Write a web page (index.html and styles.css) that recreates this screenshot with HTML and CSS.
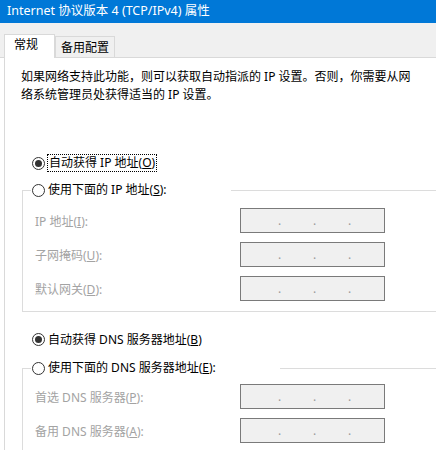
FILE: index.html
```html
<!DOCTYPE html>
<html lang="zh-CN">
<head>
    <meta charset="UTF-8">
    <title>Internet 协议版本 4 (TCP/IPv4) 属性</title>
    <link rel="stylesheet" href="styles.css">
</head>
<body>

    <div class="window">
        <div class="titlebar">Internet 协议版本 4 (TCP/IPv4) 属性</div>

        <div class="tabs">
            <div class="tab active">常规</div>
            <div class="tab">备用配置</div>
        </div>

        <div class="panel">
            <p class="intro">如果网络支持此功能，则可以获取自动指派的 IP 设置。否则，你需要从网<br>络系统管理员处获得适当的 IP 设置。</p>

            <div class="radio-row first">
                <span class="radio checked"></span>
                <span class="focus">自动获得 IP 地址(<u>O</u>)</span>
            </div>

            <fieldset class="group">
                <legend><span class="radio"></span>使用下面的 IP 地址(<u>S</u>):</legend>
                <div class="field">
                    <span class="label">IP 地址(<u>I</u>):</span>
                    <div class="ip"><span>.</span><span>.</span><span>.</span></div>
                </div>
                <div class="field">
                    <span class="label">子网掩码(<u>U</u>):</span>
                    <div class="ip"><span>.</span><span>.</span><span>.</span></div>
                </div>
                <div class="field">
                    <span class="label">默认网关(<u>D</u>):</span>
                    <div class="ip"><span>.</span><span>.</span><span>.</span></div>
                </div>
            </fieldset>

            <div class="radio-row dns">
                <span class="radio checked"></span>
                <span>自动获得 DNS 服务器地址(<u>B</u>)</span>
            </div>

            <fieldset class="group group-dns">
                <legend><span class="radio"></span>使用下面的 DNS 服务器地址(<u>E</u>):</legend>
                <div class="field">
                    <span class="label">首选 DNS 服务器(<u>P</u>):</span>
                    <div class="ip"><span>.</span><span>.</span><span>.</span></div>
                </div>
                <div class="field">
                    <span class="label">备用 DNS 服务器(<u>A</u>):</span>
                    <div class="ip"><span>.</span><span>.</span><span>.</span></div>
                </div>
            </fieldset>
        </div>
    </div>

</body>
</html>
```

FILE: styles.css
```css
* {
    box-sizing: border-box;
    margin: 0;
    padding: 0;
}
body {
    font-family: "Noto Sans", "Noto Sans CJK SC", sans-serif;
    font-size: 12px;
    color: #000;
    background: #fff;
    overflow: hidden;
}
.window {
    width: 436px;
    height: 450px;
}
.titlebar {
    height: 23px;
    background-color: #0078d7;
    color: #fff;
    padding-left: 7px;
    line-height: 21px;
    font-size: 12.5px;
}
.tabs {
    height: 35px;
    background-color: #f0f0f0;
    border-bottom: 1px solid #d9d9d9;
    display: flex;
    align-items: flex-end;
    padding-left: 4px;
}
.tab {
    height: 21px;
    padding: 0 5px;
    line-height: 22px;
    border: 1px solid #d9d9d9;
    border-bottom: none;
    background-color: #f0f0f0;
}
.tab.active {
    height: 24px;
    width: 51px;
    margin-bottom: -1px;
    padding-left: 9px;
    line-height: 20px;
    background-color: #fff;
    position: relative;
}
.panel {
    margin-left: 4px;
    border-left: 1px solid #d9d9d9;
    padding-top: 10px;
    height: 392px;
}
.intro {
    margin-left: 16px;
    line-height: 18px;
}
.radio-row {
    display: flex;
    align-items: center;
    height: 20px;
    margin-left: 27px;
}
.radio-row.first {
    margin-top: 49px;
}
.radio-row.dns {
    margin-top: 17px;
}
.radio {
    display: inline-block;
    width: 13px;
    height: 13px;
    border: 1px solid #333;
    border-radius: 50%;
    background: #fff;
    margin-right: 3px;
    position: relative;
    vertical-align: middle;
}
.radio.checked::after {
    content: "";
    position: absolute;
    left: 2px;
    top: 2px;
    width: 7px;
    height: 7px;
    border-radius: 50%;
    background: #333;
}
.focus {
    border: 1px dotted #000;
    padding: 0 1px;
    line-height: 16px;
    margin-left: -1px;
}
.group {
    margin: 7px 0 0 17px;
    border: 1px solid #dcdcdc;
    border-right: none;
    padding: 8px 0 10px 8px;
    min-width: 0;
}
.group-dns {
    margin-top: 9px;
    padding-top: 6px;
}
.group legend {
    padding: 0 64px 0 1px;
    line-height: 20px;
    height: 20px;
}
.field {
    display: flex;
    align-items: center;
    height: 25px;
}
.field + .field {
    margin-top: 9px;
}
.label {
    width: 205px;
    margin-left: 4px;
    color: #a3a3a3;
}
.ip {
    width: 145px;
    height: 25px;
    border: 1px solid #7a7a7a;
    background-color: #f0f0f0;
    display: flex;
    align-items: center;
    padding-left: 37px;
    color: #9a9a9a;
    line-height: 22px;
}
.ip span {
    width: 35px;
}
```
